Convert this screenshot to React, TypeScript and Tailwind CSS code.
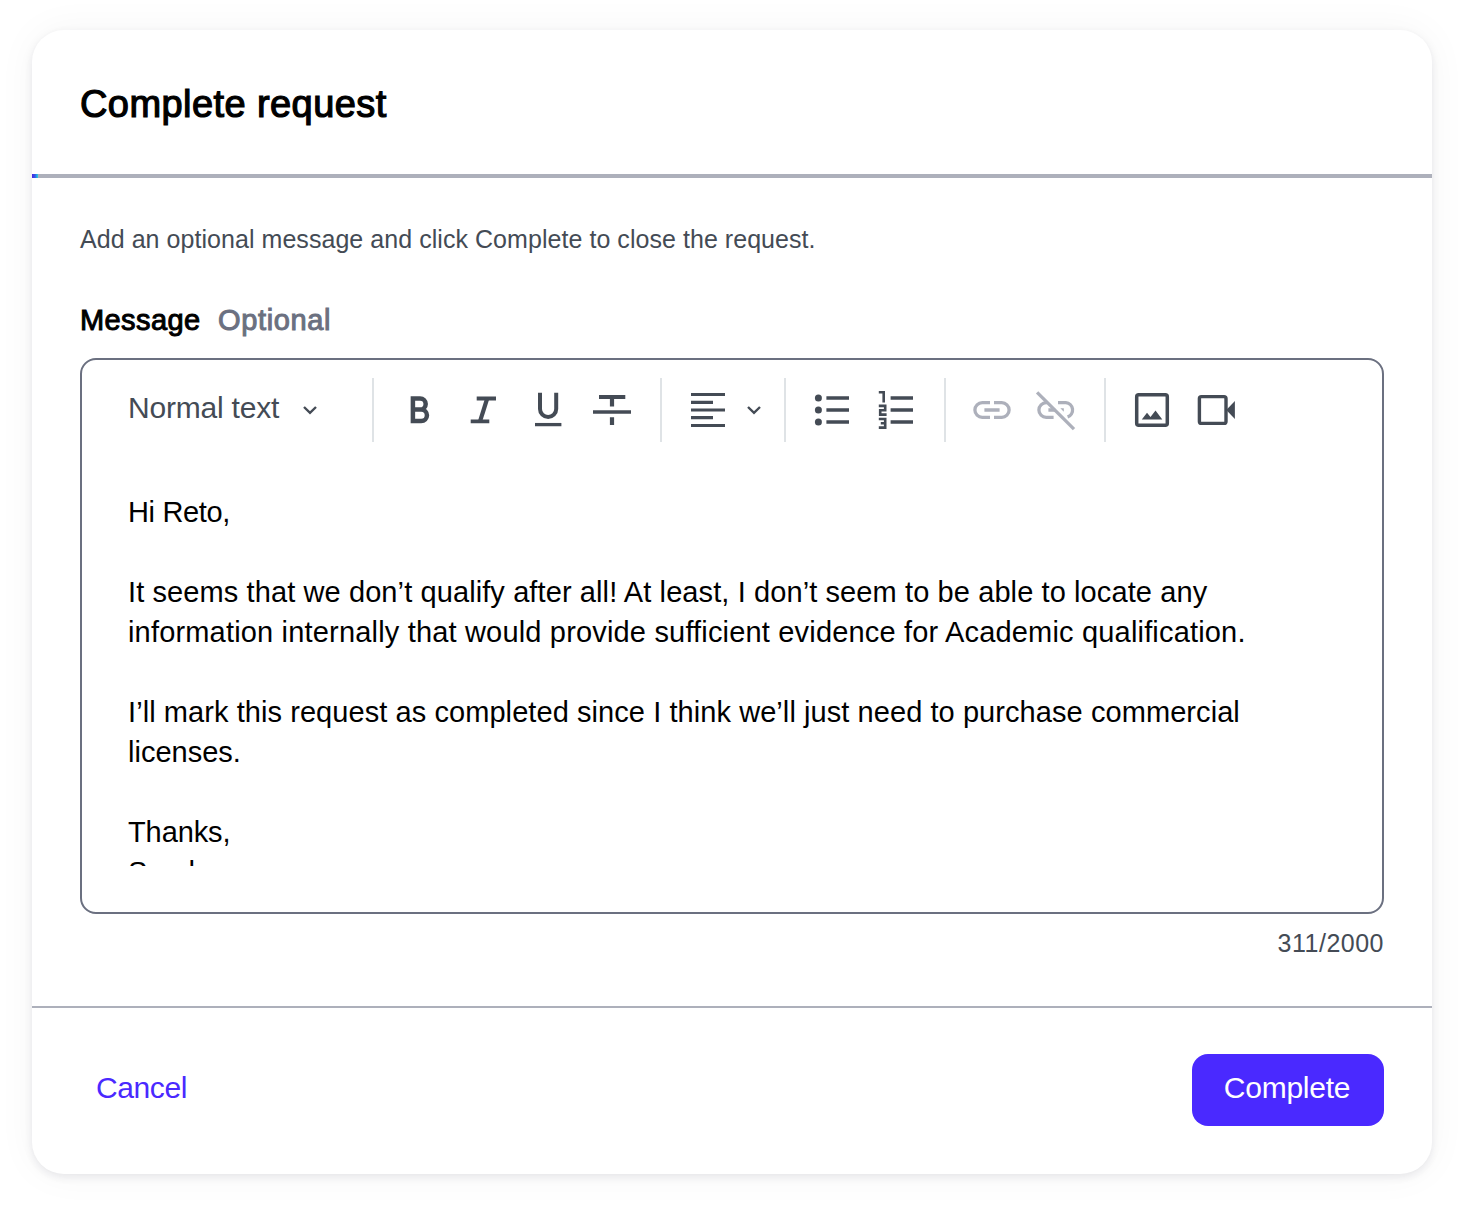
import type { ReactNode } from "react";

function Icon({ children, muted = false }: { children: ReactNode; muted?: boolean }) {
  return (
    <button className={muted ? "size-12 text-[#adb0bb]" : "size-12 text-[#444b55]"}>
      <svg viewBox="0 0 48 48" className="size-12" fill="none" stroke="currentColor" strokeWidth="3.3">
        {children}
      </svg>
    </button>
  );
}

function Chevron() {
  return (
    <svg viewBox="0 0 16 12" className="h-3 w-4 text-[#444b55]" fill="none" stroke="currentColor" strokeWidth="2.4">
      <path d="M2 3 8 8.9 14 3" />
    </svg>
  );
}

function Separator() {
  return <div className="h-16 w-0.5 shrink-0 bg-[#dfe3e6]" />;
}

function Toolbar() {
  return (
    <div className="flex h-16 items-center">
      <button className="flex w-[244px] items-center text-[30px] leading-10 tracking-[-0.2px] text-[#444b55]">
        <span className="-mt-1 w-[174px] text-left">Normal text</span>
        <Chevron />
      </button>
      <Separator />
      <div className="flex w-[286px] gap-4 pl-[22px]">
        <Icon>
          <path strokeWidth="4.5" d="M16.9 12.4h7.2a5.6 5.6 0 0 1 0 11.2h-7.2M24 23.6h1.2a5.7 5.7 0 0 1 0 11.5h-8.3V10.2" />
        </Icon>
        <Icon>
          <path strokeWidth="3.8" d="M16.7 12.5H36M10.7 35.4h18.6" />
          <path strokeWidth="4.2" d="M27.2 12.5 20 35.4" />
        </Icon>
        <Icon>
          <path strokeWidth="4" d="M16 6.7v16.2a8.1 8.1 0 0 0 16.2 0V6.7" />
          <path d="M11 38.6h26.4" />
        </Icon>
        <Icon>
          <path strokeWidth="4.2" d="M11 11h26.3M24 13v7.6M24 31.3V39" />
          <path d="M5 26h38" />
        </Icon>
      </div>
      <Separator />
      <div className="flex w-[122px] items-center gap-[14px] pl-[22px]">
        <Icon>
          <path strokeWidth="3.2" d="M7 8.5h34M7 16.3h22M7 24h34M7 31.7h22M7 39.5h34" />
        </Icon>
        <Chevron />
      </div>
      <Separator />
      <div className="flex w-[158px] gap-4 pl-[22px]">
        <Icon>
          <g fill="currentColor" stroke="none">
            <circle cx="10.4" cy="12" r="3.5" />
            <circle cx="10.4" cy="24" r="3.5" />
            <circle cx="10.4" cy="36" r="3.5" />
          </g>
          <path d="M18.4 12H41M18.4 24H41M18.4 36H41" />
        </Icon>
        <Icon>
          <path d="M18.6 12H41M18.6 24H41M18.6 36H41" />
          <path
            strokeWidth="2.6"
            d="M6.8 6.3h4.9v10.2M6.8 19.9h6.4v4.4H8.2v4.3h6.4M6.8 33h6.4v8.6H6.8M8.8 37.3h4.4"
          />
        </Icon>
      </div>
      <Separator />
      <div className="flex w-[158px] gap-4 pl-[22px]">
        <Icon muted>
          <path d="M22 16.7h-7.8a7.3 7.3 0 0 0 0 14.6H22M26 16.7h7.8a7.3 7.3 0 0 1 0 14.6H26M16.4 24h15.2" />
        </Icon>
        <Icon muted>
          <path d="M15 16.7h-.8a7.3 7.3 0 0 0 0 14.6h7.4M26 16.7h7.8a7.3 7.3 0 0 1 1.8 14.2M16.4 24h6.8" />
          <path d="M5.1 6.4 42 43.2" />
          <path fill="currentColor" stroke="none" d="M28.4 22.3h3.4v3.4Z" />
        </Icon>
      </div>
      <Separator />
      <div className="flex gap-4 pl-[22px]">
        <Icon>
          <rect x="8.7" y="8.7" width="30.6" height="30.6" rx="2" strokeWidth="3.5" />
          <path fill="currentColor" stroke="none" d="m13.8 33.6 5.2-6.9 3.5 4.4 5-6.5 6.8 9Z" />
        </Icon>
        <Icon>
          <rect x="7.4" y="10.6" width="26.6" height="26.8" rx="2" strokeWidth="3.4" />
          <path fill="currentColor" stroke="none" d="m34.3 24 8.6-9v18Z" />
        </Icon>
      </div>
    </div>
  );
}

export default function App() {
  return (
    <div className="h-[1208px] w-[1464px] overflow-hidden bg-white px-8 pt-[30px] font-['Liberation_Sans',sans-serif]">
      <main className="flex h-[1144px] flex-col rounded-[32px] bg-white shadow-[0_0_40px_rgba(0,0,0,0.045),0_3px_8px_rgba(20,25,50,0.09)]">
        <header className="h-36 px-12 pt-[49px]">
          <h1 className="text-[38px] leading-[50px] tracking-[0.42px] text-black [-webkit-text-stroke:1.2px_black]">
            Complete request
          </h1>
        </header>
        <div className="h-1 shrink-0 bg-[#adb0bb]">
          <div className="h-1 w-1.5 bg-linear-to-r from-[#4a20e0] via-[#3454e8] to-[#2cd5d8]" />
        </div>
        <section className="h-[828px] px-12 pt-[41px]">
          <p className="text-[25px] leading-10 tracking-[0.05px] whitespace-nowrap text-[#444b55]">
            Add an optional message and click Complete to close the request.
          </p>
          <div className="mt-[41px] flex text-[29px] leading-10">
            <label className="w-[138px] tracking-[0.4px] text-black [-webkit-text-stroke:1px_black]">Message</label>
            <span className="tracking-[0.65px] text-[#6b7080] [-webkit-text-stroke:1px_#6b7080]">Optional</span>
          </div>
          <div className="mt-[18px] h-[556px] rounded-2xl border-2 border-[#6b7080] px-[46px] pt-[18px]">
            <Toolbar />
            <div className="mt-[50px] h-[374px] overflow-hidden text-[29px] leading-10 whitespace-nowrap text-black">
              <p className="tracking-[-0.35px]">Hi Reto,</p>
              <p className="mt-10 tracking-[0.1px]">It seems that we don’t qualify after all! At least, I don’t seem to be able to locate any</p>
              <p className="tracking-[0.175px]">information internally that would provide sufficient evidence for Academic qualification.</p>
              <p className="mt-10 tracking-[0.07px]">I’ll mark this request as completed since I think we’ll just need to purchase commercial</p>
              <p>licenses.</p>
              <p className="mt-10 tracking-[-0.1px]">Thanks,</p>
              <p className="tracking-[-0.2px]">Sarah</p>
            </div>
          </div>
          <p className="mt-[9px] text-right text-[25px] leading-10 tracking-[0.5px] text-[#444b55]">311/2000</p>
        </section>
        <footer className="flex h-[168px] justify-between border-t-2 border-[#adb0bb] px-12 pt-[46px] text-[30px]">
          <button className="h-[72px] px-4 pb-[5px] tracking-[-0.4px] text-[#4a29ff]">Cancel</button>
          <button className="h-[72px] w-48 rounded-2xl bg-[#4a29ff] pr-0.5 pb-[5px] tracking-[-0.25px] text-white">Complete</button>
        </footer>
      </main>
    </div>
  );
}
